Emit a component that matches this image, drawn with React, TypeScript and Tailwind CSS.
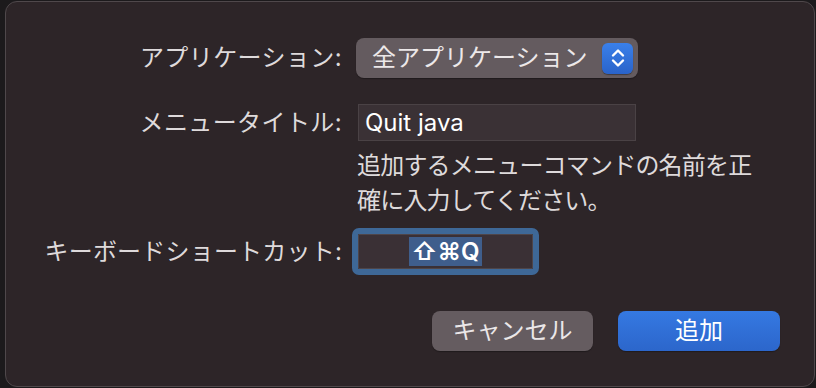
import React from 'react';

const font = { fontFamily: 'Inter, "Noto Sans CJK JP", sans-serif' };

// up/down chevrons of the macOS popup button
const Stepper = () => (
  <span className="flex h-[31px] w-[31px] items-center justify-center rounded-[6px] bg-gradient-to-b from-[#3a80ea] to-[#2a63c9] shadow-[0_1px_1px_rgba(0,0,0,0.35)]">
    <svg width="16" height="22" viewBox="0 0 16 22" fill="none" stroke="white" strokeWidth="2.4" strokeLinecap="round" strokeLinejoin="round">
      <path d="M3 8.5 L8 3.5 L13 8.5" />
      <path d="M3 13.5 L8 18.5 L13 13.5" />
    </svg>
  </span>
);

export default function App() {
  return (
    <div className="flex h-[388px] w-[816px] bg-[#1c1a1c] pt-[1px] pl-[5px] pr-[1px] pb-[1px]" style={font}>
      <div className="flex flex-1 flex-col rounded-[12px] border border-[#4f484b] bg-[#2d2528] text-[24px] leading-none text-[#dedadb]">
        <div className="grid grid-cols-[336px_1fr] gap-x-[14px] pt-[36px]">
          {/* row: application */}
          <div className="flex items-center justify-end tracking-[0.4px]">アプリケーション:</div>
          <div className="flex">
            <div className="flex h-[40px] w-[282px] items-center justify-between rounded-[8px] bg-[#645b5f] pl-[16px] pr-[5px] text-[#ece8e9] shadow-[0_1px_1px_rgba(0,0,0,0.3)]">
              <span>全アプリケーション</span>
              <Stepper />
            </div>
          </div>

          {/* row: menu title */}
          <div className="mt-[26px] flex items-center justify-end tracking-[0.4px]">メニュータイトル:</div>
          <div className="mt-[26px] pl-[2px]">
            <div className="flex h-[37px] w-[278px] items-center border border-[#4a4245] bg-[#3a3135] pl-[6px] text-white">
              Quit java
            </div>
          </div>

          {/* help text */}
          <div />
          <p className="mt-[7px] pl-[1px] leading-[35px] tracking-[-0.8px]">
            追加するメニューコマンドの名前を正
            <br />
            確に入力してください。
          </p>

          {/* row: shortcut */}
          <div className="mt-[16px] flex items-center justify-end tracking-[0.2px]">キーボードショートカット:</div>
          <div className="mt-[16px] pl-[2px]">
            <div className="flex h-[35px] w-[175px] items-center justify-center rounded-[1px] border border-[#4e4549] bg-[#3a3035] outline outline-[6px] outline-[#3e6897]">
              <span className="flex h-[29px] items-center bg-[#3f5e8c] px-[3px] font-semibold text-white">⇧⌘Q</span>
            </div>
          </div>
        </div>

        {/* buttons */}
        <div className="mt-[42px] flex justify-end gap-[25px] pr-[34px]">
          <button className="h-[40px] w-[161px] rounded-[8px] bg-[#655c60] text-[#ebe7e8] shadow-[0_1px_1px_rgba(0,0,0,0.3)]">キャンセル</button>
          <button className="h-[40px] w-[162px] rounded-[8px] bg-gradient-to-b from-[#3579e2] to-[#2c66cb] text-white shadow-[0_1px_1px_rgba(0,0,0,0.3)]">追加</button>
        </div>
      </div>
    </div>
  );
}
